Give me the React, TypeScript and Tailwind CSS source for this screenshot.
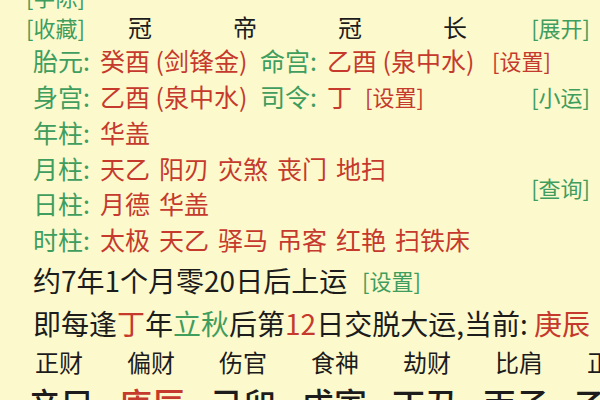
import React from "react";

const G = "text-[#3f9d5e]";
const R = "text-[#c53a2c]";
const K = "text-[#1c1c1c]";

function Label({ t }: { t: string }) {
  return <span className={`${G} inline-block w-[67px] shrink-0`}>{t}</span>;
}

function Words({ items }: { items: string[] }) {
  return (
    <span className={`${R} flex gap-[9px]`}>
      {items.map((w, i) => (
        <span key={i}>{w}</span>
      ))}
    </span>
  );
}

export default function App() {
  const shishen = ["正财", "偏财", "伤官", "食神", "劫财", "比肩", "正"];
  const ganzhi = ["辛巳", "庚辰", "己卯", "戊寅", "丁丑", "丙子", "乙"];
  return (
    <div
      className="w-[600px] h-[400px] overflow-hidden bg-[#fcf9cd]"
      style={{ fontFamily: '"Noto Sans CJK SC", "Noto Sans", sans-serif' }}
    >
      <div className="-mt-[20px] flex flex-col">
        {/* R0 */}
        <div className={`h-[32px] leading-[32px] pl-[26px] text-[22px] ${G}`}>[字陈]</div>
        {/* R1 */}
        <div className={`h-[30px] leading-[30px] pl-[26px] pr-[10px] flex items-center text-[24px] ${K}`}>
          <span className={`${G} text-[22px] w-[102px] shrink-0`}>[收藏]</span>
          <span className="w-[105px] shrink-0">冠</span>
          <span className="w-[105px] shrink-0">帝</span>
          <span className="w-[105px] shrink-0">冠</span>
          <span className="w-[85px] shrink-0">长</span>
          <span className={`${G} text-[22px] ml-auto`}>[展开]</span>
        </div>
        {/* R2 */}
        <div className="h-[36px] leading-[36px] pl-[33px] flex items-center text-[25px]">
          <Label t="胎元:" />
          <span className={`${R} w-[160px] shrink-0`}>癸酉 (剑锋金)</span>
          <Label t="命宫:" />
          <span className={`${R} w-[165px] shrink-0`}>乙酉 (泉中水)</span>
          <span className={`${R} text-[22px]`}>[设置]</span>
        </div>
        {/* R3 */}
        <div className="h-[36px] leading-[36px] pl-[33px] pr-[10px] flex items-center text-[25px]">
          <Label t="身宫:" />
          <span className={`${R} w-[160px] shrink-0`}>乙酉 (泉中水)</span>
          <Label t="司令:" />
          <span className={`${R} w-[38px] shrink-0`}>丁</span>
          <span className={`${R} text-[22px]`}>[设置]</span>
          <span className={`${G} text-[22px] ml-auto`}>[小运]</span>
        </div>
        {/* R4-R7 with side column */}
        <div className="flex pr-[10px]">
          <div className="flex flex-col pl-[33px] text-[25px]">
            <div className="h-[36px] leading-[36px] flex items-center">
              <Label t="年柱:" />
              <Words items={["华盖"]} />
            </div>
            <div className="h-[36px] leading-[36px] flex items-center">
              <Label t="月柱:" />
              <Words items={["天乙", "阳刃", "灾煞", "丧门", "地扫"]} />
            </div>
            <div className="h-[35px] leading-[35px] flex items-center">
              <Label t="日柱:" />
              <Words items={["月德", "华盖"]} />
            </div>
            <div className="h-[36px] leading-[36px] flex items-center">
              <Label t="时柱:" />
              <Words items={["太极", "天乙", "驿马", "吊客", "红艳", "扫铁床"]} />
            </div>
          </div>
          <div className="ml-auto pt-[58px]">
            <span className={`${G} text-[22px] leading-[30px]`}>[查询]</span>
          </div>
        </div>
        {/* R8 */}
        <div className={`h-[46px] leading-[46px] pl-[33px] flex items-center text-[28px] ${K}`}>
          <span className="w-[329px] shrink-0">约7年1个月零20日后上运</span>
          <span className={`${G} text-[22px]`}>[设置]</span>
        </div>
        {/* R9 */}
        <div className={`h-[40px] leading-[40px] pl-[33px] whitespace-nowrap text-[28px] ${K}`}>
          即每逢<span className={R}>丁</span>年<span className={G}>立秋</span>后第
          <span className={R}>12</span>日交脱大运,当前: <span className={R}>庚辰</span>
        </div>
        {/* R10 */}
        <div className={`h-[38px] leading-[38px] pl-[35px] flex text-[24px] ${K}`}>
          {shishen.map((s, i) => (
            <span key={i} className="w-[92px] shrink-0">
              {s}
            </span>
          ))}
        </div>
        {/* R11 */}
        <div className={`h-[44px] leading-[44px] pl-[28px] flex text-[33px] font-medium ${K}`}>
          {ganzhi.map((s, i) => (
            <span key={i} className={`w-[91px] shrink-0 ${i === 1 ? R : ""}`}>
              {s}
            </span>
          ))}
        </div>
      </div>
    </div>
  );
}
